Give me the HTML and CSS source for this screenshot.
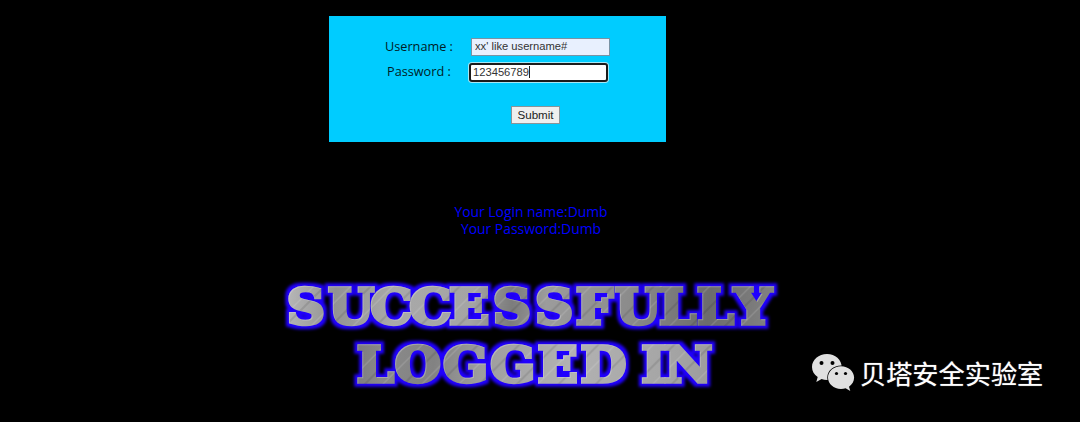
FILE: index.html
```html
<!DOCTYPE html>
<html lang="en">
<head>
<meta charset="utf-8">
<title>Login</title>
<link rel="stylesheet" href="styles.css">
</head>
<body>
<main class="page">
  <form class="login">
    <div class="row row-user"><label class="label" for="user">Username :</label><input class="field field-user" id="user" type="text" value="xx' like username#"></div>
    <div class="row row-pass"><label class="label label-pass" for="pass">Password :</label><div class="field field-pass" id="pass"><span>123456789</span><i class="caret"></i></div></div>
    <button class="submit" type="button">Submit</button>
  </form>
  <div class="result">
    <div class="result-name">Your Login name:Dumb</div>
    <div class="result-pass">Your Password:Dumb</div>
  </div>
  <svg class="banner" width="520" height="130" viewBox="272 270 520 130">
    <defs>
      <linearGradient id="steel" gradientUnits="userSpaceOnUse" x1="287" y1="280" x2="776" y2="330">
        <stop offset="0" stop-color="#b8b8b8"/><stop offset=".1" stop-color="#929292"/><stop offset=".22" stop-color="#a9a9a9"/><stop offset=".38" stop-color="#a4a4a4"/><stop offset=".46" stop-color="#7c7c7c"/><stop offset=".53" stop-color="#9c9c9c"/><stop offset=".7" stop-color="#8b8b8b"/><stop offset=".86" stop-color="#6c6c6c"/><stop offset="1" stop-color="#848484"/>
      </linearGradient>
      <linearGradient id="steel2" gradientUnits="userSpaceOnUse" x1="357" y1="340" x2="713" y2="385">
        <stop offset="0" stop-color="#7c7c7c"/><stop offset=".08" stop-color="#8a8a8a"/><stop offset=".22" stop-color="#828282"/><stop offset=".35" stop-color="#9d9d9d"/><stop offset=".6" stop-color="#b2b2b2"/><stop offset=".85" stop-color="#a6a6a6"/><stop offset="1" stop-color="#9c9c9c"/>
      </linearGradient>
      <pattern id="brush1" patternUnits="userSpaceOnUse" x="272" y="270" width="520" height="130" patternTransform="scale(.92593 1) translate(-287 0)">
        <rect width="520" height="130" fill="url(#steel)" transform="translate(-272 -270)" x="272" y="270"/>
        <path class="scratch-light" d="M0 58L58 0M31 64L95 0M73 64L137 0M122 64L186 0M160 64L224 0M197 64L261 0M238 64L302 0M271 64L335 0M310 64L374 0M352 64L416 0M390 64L454 0M431 64L495 0M461 64L520 5"/>
        <path class="scratch-dark" d="M5 64L69 0M51 64L115 0M96 64L160 0M140 64L204 0M178 64L242 0M217 64L281 0M257 64L321 0M293 64L357 0M334 64L398 0M374 64L438 0M411 64L475 0M445 64L509 0"/>
      </pattern>
      <pattern id="brush2" patternUnits="userSpaceOnUse" x="272" y="270" width="520" height="130" patternTransform="scale(.92593 1) translate(-287 0)">
        <rect x="272" y="270" width="520" height="130" fill="url(#steel2)" transform="translate(-272 -270)"/>
        <path class="scratch-light" d="M58 130L128 60M95 130L165 60M134 130L204 60M171 130L241 60M211 130L281 60M250 130L320 60M288 130L358 60M326 130L396 60M365 130L435 60M406 130L476 60"/>
        <path class="scratch-dark" d="M77 130L147 60M116 130L186 60M151 130L221 60M192 130L262 60M229 130L299 60M271 130L341 60M308 130L378 60M347 130L417 60M384 130L454 60"/>
      </pattern>
      <filter id="glow" filterUnits="userSpaceOnUse" x="272" y="270" width="520" height="130" color-interpolation-filters="sRGB">
        <feMorphology in="SourceAlpha" operator="dilate" radius="3" result="fat"/>
        <feGaussianBlur in="fat" stdDeviation="1.6" result="soft"/>
        <feFlood flood-color="#2000ff"/>
        <feComposite in2="soft" operator="in" result="halo"/>
        <feOffset in="SourceAlpha" dx="1" dy="1" result="shift"/>
        <feFlood flood-color="#dedee8" flood-opacity=".35"/>
        <feComposite in2="SourceAlpha" operator="in"/>
        <feComposite in2="shift" operator="out" result="edge"/>
        <feMerge><feMergeNode in="halo"/><feMergeNode in="SourceGraphic"/><feMergeNode in="edge"/></feMerge>
      </filter>
    </defs>
    <g class="banner-text" filter="url(#glow)">
      <text class="line-one" transform="translate(287 0) scale(1.08 1)" y="324.200" x="-.3 38 77.200 113.200 150 190.500 229.600 267.400 303.700 344.400 379.400 414">SUCCESSFULLY</text>
      <text class="line-two" transform="translate(287 0) scale(1.08 1)" y="382.200" x="64.700 99.700 144.500 188.100 232 271.700 315 328 349">LOGGED IN</text>
    </g>
  </svg>
  <div class="brand">
    <svg class="brand-icon" width="44" height="38" viewBox="811 353 44 38">
      <path class="bubble" d="M827 354c-8.300 0-15 5.700-15 13 0 4.200 2.200 7.700 5.700 10l-1.400 4.900 5.300-2.800c1.700.5 3.400.9 5.400.9 8.300 0 14.700-5.900 14.700-13S835.300 354 827 354z"/>
      <path class="bubble bubble-front" d="M841 366.200c-7.300 0-13 5.100-13 11.400s5.700 11.400 13 11.400c1.700 0 3.200-.3 4.600-.7l4.700 2.600-1.300-4.200c3.200-2.100 5.100-5.300 5.100-9.100 0-6.300-5.800-11.400-13.100-11.400z"/>
      <g class="eyes"><circle cx="821.500" cy="363" r="2"/><circle cx="832.500" cy="363" r="2"/><circle cx="836.500" cy="373.500" r="1.600"/><circle cx="845.500" cy="373.500" r="1.600"/></g>
    </svg>
    <span class="brand-name">贝塔安全实验室</span>
  </div>
</main>
</body>
</html>
```
FILE: styles.css
```css
* { box-sizing: border-box; }
body { margin: 0; background: #000; overflow: hidden; }
.page { position: relative; height: 422px; padding-top: 16px; }
.login {
  width: 337px; height: 126px; margin-left: 329px; padding-top: 21px;
  background: #00ccff;
}
.row { display: flex; align-items: center; }
.row-user { height: 20px; padding-left: 56px; }
.row-pass { height: 22px; margin-top: 4px; padding-left: 58px; }
.label {
  width: 86px; padding-bottom: 3px; font: 500 12.700px/18px "Open Sans", sans-serif;
  color: #001c26; white-space: nowrap;
}
.label-pass { width: 82px; }
.field {
  font: 11.200px/14px "Liberation Sans", Arial, sans-serif; color: #333;
  border: 1px solid #7893a5; padding: 0 3px; outline: none;
}
.field-user { width: 139px; height: 18px; padding-bottom: 2px; background: #e8f0fe; }
.field-pass {
  display: flex; align-items: center; width: 139px; height: 19px;
  background: #fff; border: 2px solid #1b1b1b; border-radius: 3px;
  box-shadow: 0 0 0 1px #a5e7f5; padding: 0 2px;
}
.caret { width: 1px; height: 12px; background: #222; }
.submit {
  display: block; width: 49px; height: 18px; margin: 23px 0 0 182px; padding: 0 0 1px;
  font: 11.600px/15px "Liberation Sans", Arial, sans-serif; color: #222;
  background: #efefef; border: 1px solid #8a9499;
}
.result {
  width: 160px; height: 35px; margin: 61px 0 0 451px; text-align: center; white-space: nowrap;
  font: 500 13.900px/17px "Open Sans", sans-serif; color: #0000ff;
}
.banner { display: block; margin: 32px 0 0 272px; }
.banner-text { font: bold 49px "DejaVu Serif", serif; stroke-width: 3.500; }
.line-one { fill: url(#brush1); stroke: url(#brush1); }
.line-two { fill: url(#brush2); stroke: url(#brush2); }
.scratch-light { fill: none; stroke: #fff; stroke-opacity: .13; stroke-width: 1.500; }
.scratch-dark { fill: none; stroke: #000; stroke-opacity: .1; stroke-width: 2; }
.brand { position: absolute; left: 811px; top: 353px; display: flex; height: 40px; }
.brand-icon { flex: none; }
.bubble { fill: #e0e0e0; }
.bubble-front { stroke: #000; stroke-width: 1.500; paint-order: stroke; }
.eyes { fill: #000; }
.brand-name {
  margin-left: 5px; font: 26.200px/41px "Noto Sans CJK SC", sans-serif;
  color: #fff; white-space: nowrap; text-shadow: 0 0 1px #aaa;
}
```
